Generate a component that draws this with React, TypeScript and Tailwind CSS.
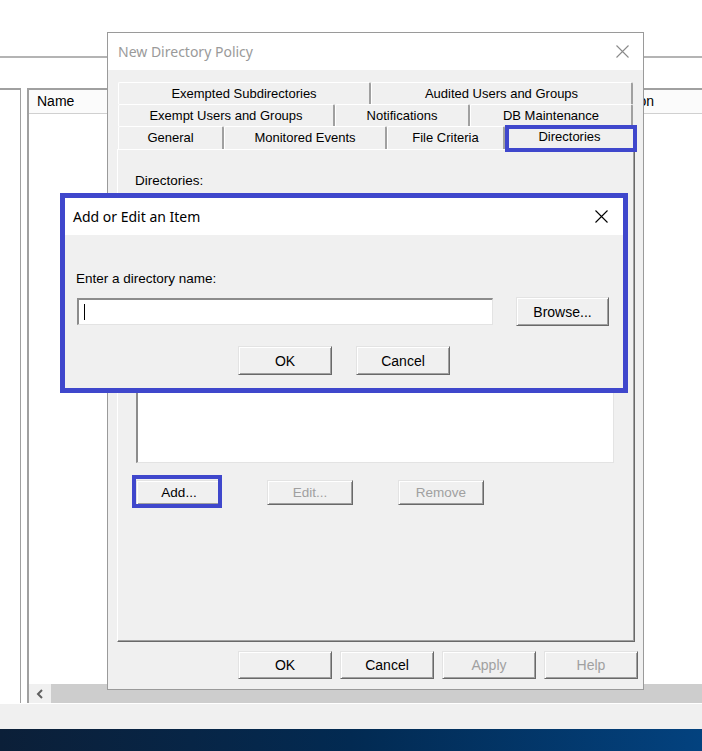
const ui = { fontFamily: '"Liberation Sans", Arial, sans-serif' };
const title = { fontFamily: '"Noto Sans", "Liberation Sans", sans-serif' };

const btnBase =
  "flex items-center justify-center bg-[#f0f0f0] border border-t-[#e3e3e3] border-l-[#e3e3e3] border-r-[#696969] border-b-[#696969] shadow-[inset_1px_1px_0_#ffffff,inset_-1px_-1px_0_#a0a0a0] text-[13.5px] leading-none";

const Button = ({
  label,
  className,
  disabled = false,
}: {
  label: string;
  className: string;
  disabled?: boolean;
}) => (
  <div
    className={`${btnBase} ${className} ${
      disabled ? "text-[#a0a0a0]" : "text-black"
    }`}
  >
    {label}
  </div>
);

const CloseIcon = ({ color }: { color: string }) => (
  <svg width="13" height="13" viewBox="0 0 13 13">
    <path d="M0.5 0.5 L12.5 12.5 M12.5 0.5 L0.5 12.5" stroke={color} strokeWidth="1.1" />
  </svg>
);

const tabCls =
  "flex h-[22px] items-center justify-center border-t border-l border-t-white border-l-white border-r-2 border-r-[#a0a0a0] rounded-t-[2px] text-[13px] text-black bg-[#f0f0f0]";

const rows = [
  [
    { label: "Exempted Subdirectories", w: "w-[253px]" },
    { label: "Audited Users and Groups", w: "w-[262px]" },
  ],
  [
    { label: "Exempt Users and Groups", w: "w-[217px]" },
    { label: "Notifications", w: "w-[135px]" },
    { label: "DB Maintenance", w: "w-[163px]" },
  ],
];

const Highlight = ({ className }: { className: string }) => (
  <span className={`pointer-events-none absolute border-4 border-[#3f47cc] ${className}`} />
);

export default function App() {
  return (
    <div className="relative flex h-[751px] w-[702px] flex-col overflow-hidden bg-white" style={ui}>
      {/* background application window */}
      <div className="h-[58px] border-b-2 border-[#b4b4b4] bg-white" />
      <div className="flex flex-1 pt-[30px]">
        <div className="w-[21px] border-t-2 border-r border-[#a0a0a0] bg-white" />
        <div className="ml-[6px] flex flex-1 flex-col border-t-2 border-l-2 border-[#a0a0a0] bg-white">
          <div className="flex h-[24px] items-center border-b border-[#d0d0d0] bg-[#fbfbfb] text-[14px]">
            <div className="w-[551px] shrink-0 pl-[8px]">Name</div>
            <div className="whitespace-nowrap pl-[4px]">Description</div>
          </div>
          <div className="flex-1" />
          <div className="flex h-[19px]">
            <div className="flex w-[22px] items-center justify-center bg-[#f0f0f0]">
              <svg width="8" height="10" viewBox="0 0 8 10">
                <path d="M6 1 L2 5 L6 9" stroke="#606060" strokeWidth="2" fill="none" />
              </svg>
            </div>
            <div className="flex-1 bg-[#cdcdcd]" />
          </div>
        </div>
      </div>
      <div className="h-[26px] border-t border-white bg-[#f0f0f0]" />
      <div className="h-[22px] bg-gradient-to-r from-[#0b1f38] via-[#022a52] to-[#03427f]" />

      {/* New Directory Policy dialog */}
      <div className="absolute left-[107px] top-[32px] flex h-[658px] w-[537px] flex-col border border-[#9a9a9a] bg-[#f0f0f0]">
        <div className="flex h-[37px] items-center justify-between bg-white pl-[10px] pr-[14px]">
          <span className="text-[14px] text-[#9a9a9a]" style={title}>
            New Directory Policy
          </span>
          <CloseIcon color="#8a8a8a" />
        </div>
        <div className="flex flex-1 flex-col pl-[9px] pt-[12px]">
          <div className="flex flex-col pl-[1px]">
            {rows.map((row, i) => (
              <div key={i} className="flex">
                {row.map((t) => (
                  <div key={t.label} className={`${tabCls} ${t.w}`}>
                    {t.label}
                  </div>
                ))}
              </div>
            ))}
            <div className="flex h-[23px]">
              <div className={`${tabCls} h-[23px] w-[106px]`}>General</div>
              <div className={`${tabCls} h-[23px] w-[163px]`}>Monitored Events</div>
              <div className={`${tabCls} h-[23px] w-[118px]`}>File Criteria</div>
              <div className="relative flex h-[23px] w-[128px] items-center justify-center border-t border-l border-white bg-[#f0f0f0] text-[13px]">
                <span className="-mt-[3px]">Directories</span>
                <Highlight className="-left-[1px] -top-[2px] -right-[4px] -bottom-[3px]" />
              </div>
            </div>
          </div>
          <div className="flex h-[493px] w-[518px] flex-col border-t border-l border-white border-r border-b border-r-[#696969] border-b-[#696969] shadow-[inset_-1px_-1px_0_#a0a0a0] pl-[17px] pt-[23px]">
            <div className="text-[13.5px] leading-[16px]">Directories:</div>
            <div className="ml-[1px] mt-[8px] h-[266px] w-[478px] border-t-2 border-l-2 border-t-[#8c8c8c] border-l-[#8c8c8c] border-r border-b border-r-[#e3e3e3] border-b-[#e3e3e3] bg-white" />
            <div className="ml-[1px] mt-[17px] flex gap-[45px]">
              <div className="relative">
                <Button label="Add..." className="h-[25px] w-[86px]" />
                <Highlight className="-left-[4px] -top-[5px] right-0 -bottom-[3px]" />
              </div>
              <Button label="Edit..." className="h-[25px] w-[86px]" disabled />
              <Button label="Remove" className="h-[25px] w-[86px]" disabled />
            </div>
          </div>
          <div className="mt-[9px] flex gap-[8px] pl-[121px]">
            <Button label="OK" className="h-[28px] w-[94px] text-[14px]" />
            <Button label="Cancel" className="h-[28px] w-[94px] text-[14px]" />
            <Button label="Apply" className="h-[28px] w-[94px] text-[14px]" disabled />
            <Button label="Help" className="h-[28px] w-[94px] text-[14px]" disabled />
          </div>
        </div>
      </div>

      {/* Add or Edit an Item dialog (highlighted) */}
      <div className="absolute left-[60px] top-[193px] flex h-[200px] w-[568px] flex-col border-[5px] border-[#3f47cc] bg-[#f0f0f0]">
        <div className="flex h-[37px] items-center justify-between bg-white pl-[8px] pr-[15px]">
          <span className="text-[14px] text-black" style={title}>
            Add or Edit an Item
          </span>
          <CloseIcon color="#000000" />
        </div>
        <div className="flex flex-1 flex-col pl-[11px] pt-[36px]">
          <div className="text-[13.5px] leading-[16px]">Enter a directory name:</div>
          <div className="mt-[10px] flex items-center gap-[23px] pl-[1px]">
            <div className="flex h-[27px] w-[416px] items-center border-t-2 border-l-2 border-t-[#8c8c8c] border-l-[#8c8c8c] border-r border-b border-r-[#e3e3e3] border-b-[#e3e3e3] bg-white pl-[5px]">
              <span className="h-[16px] w-px bg-black" />
            </div>
            <Button label="Browse..." className="h-[29px] w-[93px] text-[14px]" />
          </div>
          <div className="mt-[20px] flex justify-center gap-[24px] pr-[11px]">
            <Button label="OK" className="h-[29px] w-[94px] text-[14px]" />
            <Button label="Cancel" className="h-[29px] w-[94px] text-[14px]" />
          </div>
        </div>
      </div>
    </div>
  );
}
